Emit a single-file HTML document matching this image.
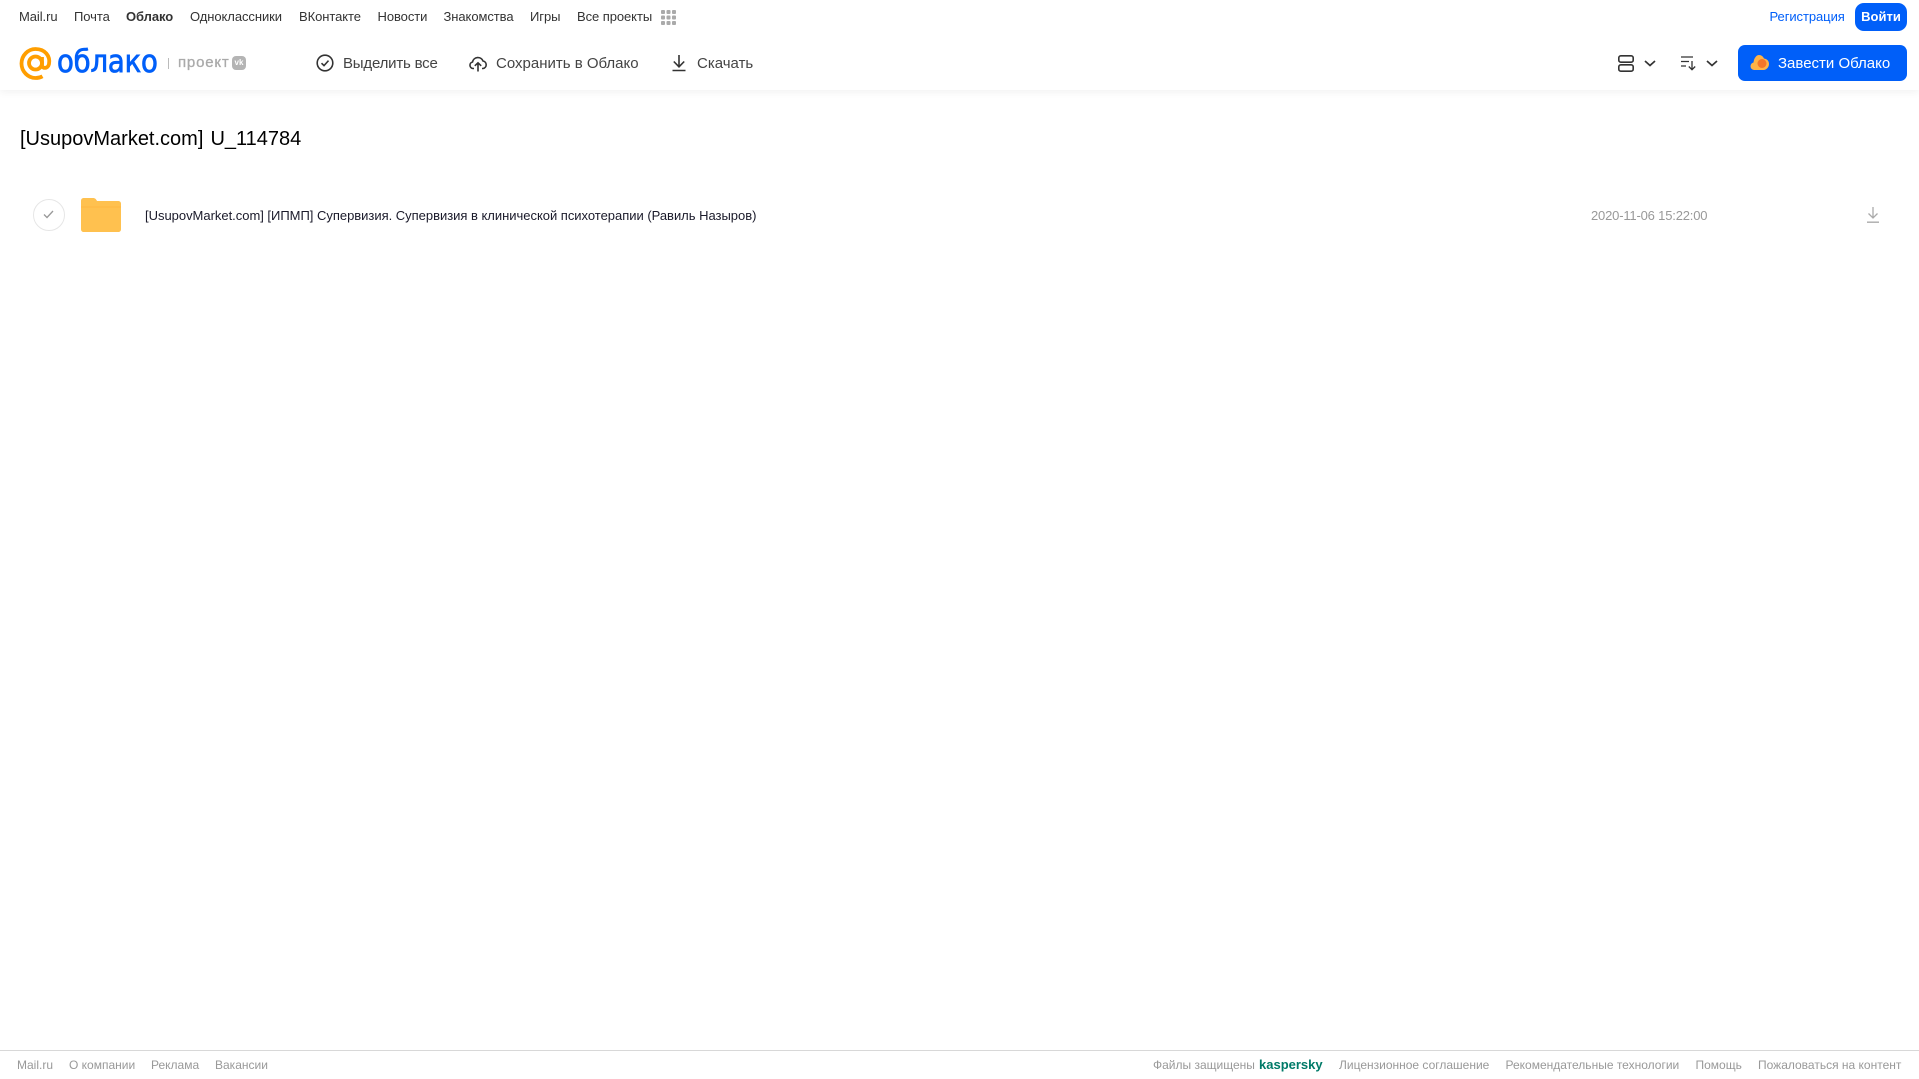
<!DOCTYPE html>
<html lang="ru"><head><meta charset="utf-8"><title>Облако</title>
<style>
html,body{margin:0;padding:0;background:#fff}
body{width:1919px;height:1079px;position:relative;overflow:hidden;font-family:"Liberation Sans",Arial,sans-serif}
.t{position:absolute;white-space:nowrap;line-height:20px}
.n{top:7px;font-size:13px;color:#333;letter-spacing:-.07px}
.a{top:53.500px;font-size:15px;color:#444;}
.f{top:1055px;font-size:12px;color:#999;line-height:20px}
svg{position:absolute;overflow:visible}
</style></head><body>
<div style="position:absolute;left:0;top:0;width:1919px;height:90px;background:#fff;box-shadow:0 2px 8px rgba(0,0,0,.06)"></div>

<span class="t n" style="left:19px">Mail.ru</span>
<span class="t n" style="left:74px">Почта</span>
<span class="t n" style="left:126px;font-weight:bold">Облако</span>
<span class="t n" style="left:190px">Одноклассники</span>
<span class="t n" style="left:299px">ВКонтакте</span>
<span class="t n" style="left:377.500px">Новости</span>
<span class="t n" style="left:443.500px">Знакомства</span>
<span class="t n" style="left:530px">Игры</span>
<span class="t n" style="left:577px">Все проекты</span>
<svg style="left:661px;top:10px" width="15" height="15" fill="#aaa"><rect x="0" y="0" width="4" height="4" rx="1"/><rect x="5.500" y="0" width="4" height="4" rx="1"/><rect x="11" y="0" width="4" height="4" rx="1"/><rect x="0" y="5.500" width="4" height="4" rx="1"/><rect x="5.500" y="5.500" width="4" height="4" rx="1"/><rect x="11" y="5.500" width="4" height="4" rx="1"/><rect x="0" y="11" width="4" height="4" rx="1"/><rect x="5.500" y="11" width="4" height="4" rx="1"/><rect x="11" y="11" width="4" height="4" rx="1"/></svg>

<span class="t" style="left:1769.500px;top:7px;font-size:13px;color:#005ff9;letter-spacing:-.07px">Регистрация</span>
<div class="t" style="left:1855px;top:3px;width:52px;height:28px;border-radius:9px;background:#005ff9;color:#fff;font-size:13px;font-weight:bold;text-align:center;line-height:27px">Войти</div>

<svg style="left:19px;top:47px" width="33" height="33" viewBox="0 0 33 33" fill="none" stroke="#ff9e00" stroke-width="3.800"><circle cx="16.500" cy="16" r="6.500"/><path d="M23 10v8c0 4 6 4 7-1 1.500-8-4-15-13.500-15C9 2 2.500 8.500 2.500 16.500S9 31 16.500 31c3 0 5-.6 7-1.700"/></svg>
<span class="t" style="left:57px;top:44px;font-size:31px;line-height:36px;font-family:'DejaVu Sans','Liberation Sans',sans-serif;color:#005ff9;font-weight:normal;letter-spacing:-.2px;-webkit-text-stroke:.8px #005ff9;transform-origin:left center;transform:scaleX(.888)">облако</span>
<div style="position:absolute;left:168px;top:58px;width:1px;height:11px;background:#bbb"></div>
<span class="t" style="left:178px;top:53px;font-size:15px;color:#aaa;letter-spacing:.8px;-webkit-text-stroke:.3px #aaa">проект</span>
<div class="t" style="left:232px;top:56px;width:14px;height:14px;border-radius:4px;background:#b4b4b4;color:#fff;font-size:8px;font-weight:bold;line-height:14px;text-align:center">vk</div>

<svg style="left:316px;top:54px" width="18" height="18" viewBox="0 0 18 18" fill="none" stroke="#333" stroke-width="1.600"><circle cx="9" cy="9" r="7.800"/><path d="M5.500 9.200l2.500 2.400 4.500-5"/></svg>
<span class="t a" style="left:343px;letter-spacing:-.2px">Выделить все</span>
<svg style="left:469px;top:54px" width="18" height="18" viewBox="0 0 18 18" fill="none" stroke="#333" stroke-width="1.600"><path d="M5 14.500H4A3.300 3.300 0 0 1 3.500 8 5.500 5.500 0 0 1 14 7a3.800 3.800 0 0 1 0 7.500h-1"/><path d="M9 17.500V9M5.800 11.800L9 8.800l3.200 3"/></svg>
<span class="t a" style="left:496px">Сохранить в Облако</span>
<svg style="left:671px;top:54px" width="16" height="18" viewBox="0 0 16 18" fill="none" stroke="#333" stroke-width="1.600"><path d="M8 1v11.500M2.800 7.500L8 12.800l5.200-5.300M1.500 16.500h13"/></svg>
<span class="t a" style="left:697px">Скачать</span>

<svg style="left:1618px;top:55px" width="16" height="17" viewBox="0 0 16 17" fill="none" stroke="#333" stroke-width="1.600"><rect x=".8" y=".8" width="14.400" height="6.400" rx="2"/><rect x=".8" y="9.800" width="14.400" height="6.400" rx="2"/></svg>
<svg style="left:1644px;top:60px" width="12" height="7" fill="none" stroke="#333" stroke-width="1.700"><path d="M1 1l5 4.500L11 1"/></svg>
<svg style="left:1681px;top:56px" width="16" height="15" viewBox="0 0 16 15" fill="none" stroke="#333" stroke-width="1.300"><path d="M0 1h12M0 5.500h8M0 10h5M11 5v8.500M7.800 10.500l3.200 3.200 3.200-3.200"/></svg>
<svg style="left:1706px;top:60px" width="12" height="7" fill="none" stroke="#333" stroke-width="1.700"><path d="M1 1l5 4.500L11 1"/></svg>

<div style="position:absolute;left:1738px;top:45px;width:169px;height:36px;border-radius:7px;background:#005ff9"></div>
<svg style="left:1750px;top:54px" width="20" height="18" viewBox="0 0 20 18"><path d="M4 16a3.800 3.800 0 0 1-.5-7.500C4 4 6.500 1 9 1c2.500 0 4 1.500 5 3.500 3 .3 5 2.500 5 5.500s-2.500 6-5.500 6z" fill="#ffb347"/><circle cx="12" cy="9.500" r="4.500" fill="#f4762a"/></svg>
<span class="t" style="left:1778px;top:53.500px;font-size:15px;color:#fff">Завести Облако</span>

<span class="t" style="left:20px;top:125.500px;font-size:20px;line-height:26px;color:#000;word-spacing:1.500px">[UsupovMarket.com] U_114784</span>

<div style="position:absolute;left:33px;top:199px;width:30px;height:30px;border:1px solid #e6e6e6;border-radius:50%"></div>
<svg style="left:43px;top:210px" width="11" height="9" fill="none" stroke="#999" stroke-width="1.300"><path d="M1 4.500l3 3L10 1"/></svg>
<svg style="left:81px;top:198px" width="40" height="34" viewBox="0 0 40 34"><path d="M3 0h9c2 0 3 1 4 3h21c2 0 3 1 3 3v25c0 2-1 3-3 3H3c-2 0-3-1-3-3V3C0 1 1 0 3 0z" fill="#ffc14f"/><path d="M0 9h40" stroke="#ffb43a" stroke-width="1" opacity=".7"/></svg>
<span class="t" style="left:145px;top:206px;font-size:13px;color:#1a1a2a;letter-spacing:-.02px">[UsupovMarket.com] [ИПМП] Супервизия. Супервизия в клинической психотерапии (Равиль Назыров)</span>
<span class="t" style="left:1591px;top:206px;font-size:13px;color:#999;letter-spacing:-.18px">2020-11-06 15:22:00</span>
<svg style="left:1866px;top:206px" width="14" height="18" viewBox="0 0 14 18" fill="none" stroke="#aaa" stroke-width="1.300"><path d="M7 1v11M2.500 7.500L7 12l4.500-4.500M1 16.200h12"/></svg>

<div style="position:absolute;left:0;top:1050px;width:1919px;height:1px;background:#d8d8d8"></div>
<span class="t f" style="left:17px">Mail.ru</span>
<span class="t f" style="left:69px">О компании</span>
<span class="t f" style="left:151px">Реклама</span>
<span class="t f" style="left:215px">Вакансии</span>
<span class="t f" style="left:1153px">Файлы защищены</span>
<span class="t f" style="left:1259px;font-size:13px;font-weight:bold;color:#007a68">kaspersky</span>
<span class="t f" style="left:1339px">Лицензионное соглашение</span>
<span class="t f" style="left:1505.500px">Рекомендательные технологии</span>
<span class="t f" style="left:1695.500px">Помощь</span>
<span class="t f" style="left:1758px">Пожаловаться на контент</span>
</body></html>
